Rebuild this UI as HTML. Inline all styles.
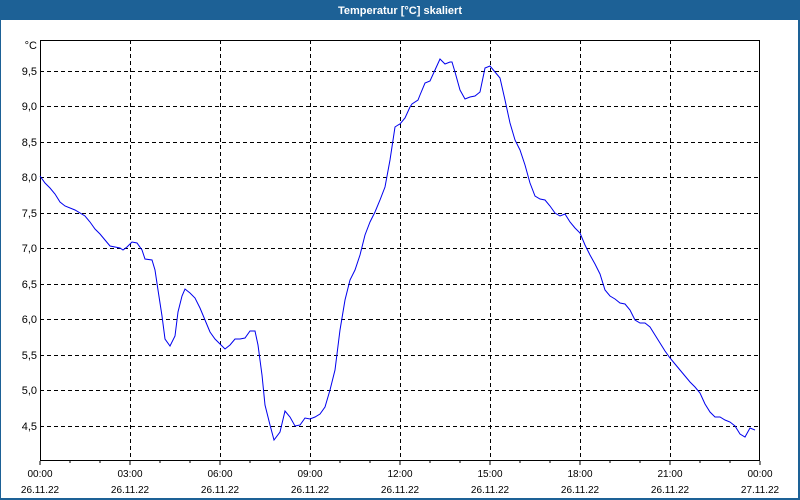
<!DOCTYPE html>
<html><head><meta charset="utf-8"><style>
html,body{margin:0;padding:0;width:800px;height:500px;overflow:hidden;background:#fff;font-family:"Liberation Sans",sans-serif}
</style></head><body>
<svg width="800" height="500" xmlns="http://www.w3.org/2000/svg" style="display:block">
<rect x="0" y="0" width="800" height="500" fill="#1d6196"/>
<rect x="1" y="20" width="797" height="478" fill="#fff"/>
<text x="400" y="14" fill="#fff" font-size="11" font-weight="bold" text-anchor="middle" font-family="Liberation Sans,sans-serif">Temperatur [°C] skaliert</text>
<g stroke="#000" stroke-width="1" stroke-dasharray="4,3" shape-rendering="crispEdges">
<line x1="130.5" y1="40" x2="130.5" y2="461"/><line x1="220.5" y1="40" x2="220.5" y2="461"/><line x1="310.5" y1="40" x2="310.5" y2="461"/><line x1="400.5" y1="40" x2="400.5" y2="461"/><line x1="490.5" y1="40" x2="490.5" y2="461"/><line x1="580.5" y1="40" x2="580.5" y2="461"/><line x1="670.5" y1="40" x2="670.5" y2="461"/>
<line x1="40" y1="71.5" x2="760" y2="71.5"/><line x1="40" y1="106.5" x2="760" y2="106.5"/><line x1="40" y1="142.5" x2="760" y2="142.5"/><line x1="40" y1="177.5" x2="760" y2="177.5"/><line x1="40" y1="213.5" x2="760" y2="213.5"/><line x1="40" y1="248.5" x2="760" y2="248.5"/><line x1="40" y1="284.5" x2="760" y2="284.5"/><line x1="40" y1="319.5" x2="760" y2="319.5"/><line x1="40" y1="355.5" x2="760" y2="355.5"/><line x1="40" y1="390.5" x2="760" y2="390.5"/><line x1="40" y1="426.5" x2="760" y2="426.5"/>
</g>
<g stroke="#000" stroke-width="1" fill="none" shape-rendering="crispEdges">
<rect x="40.5" y="40.5" width="719" height="420"/>
<path d="M40 461v4M70 461v2M100 461v2M130 461v4M160 461v2M190 461v2M220 461v4M250 461v2M280 461v2M310 461v4M340 461v2M370 461v2M400 461v4M430 461v2M460 461v2M490 461v4M520 461v2M550 461v2M580 461v4M610 461v2M640 461v2M670 461v4M700 461v2M730 461v2M760 461v4"/>
</g>
<polyline fill="none" stroke="#0000ee" stroke-width="1" points="40,176 45,183 50,188 55,194 60,202 65,206 75,210 85,216 90,222 95,229 100,234 105,240 110,246 120,248 123,250 127,247 132,242 137,243 142,250 145,259 152,260 155,270 158,290 162,316 165,339 170,346 175,336 178,312 182,296 185,289 190,293 195,298 200,308 205,320 210,332 215,339 220,344 225,349 230,345 235,339 240,339 245,338 250,331 255,331 258,345 262,375 265,405 270,425 274,440 280,432 285,411 290,417 295,426 300,425 305,418 310,419 315,417 320,414 325,407 330,390 335,370 340,330 345,300 350,280 355,270 360,255 365,235 370,222 375,212 380,200 385,187 390,160 395,127 398,125 400,124 405,118 410,107 412,104 418,100 420,95 425,83 430,81 435,70 440,59 445,64 450,62 452,62 455,72 460,90 465,99 470,97 475,96 480,92 485,68 490,66 495,72 500,78 505,100 510,123 515,140 520,150 525,165 530,183 535,196 540,199 545,200 550,206 555,213 560,216 565,214 570,222 575,228 580,233 585,245 590,255 595,264 600,274 605,290 610,296 615,299 620,303 625,304 630,310 635,320 640,323 645,323 650,327 655,335 660,343 665,351 670,358 675,364 680,370 685,376 690,382 695,387 700,393 705,404 710,412 715,417 720,417 725,420 730,422 735,426 740,434 745,437 750,428 755,430"/>
<g font-size="11" fill="#000" font-family="Liberation Sans,sans-serif" text-anchor="end">
<text x="37" y="49">°C</text>
<text x="37" y="75">9,5</text><text x="37" y="110">9,0</text><text x="37" y="146">8,5</text><text x="37" y="181">8,0</text><text x="37" y="217">7,5</text><text x="37" y="252">7,0</text><text x="37" y="288">6,5</text><text x="37" y="323">6,0</text><text x="37" y="359">5,5</text><text x="37" y="394">5,0</text><text x="37" y="430">4,5</text>
</g>
<g font-size="10" fill="#000" font-family="Liberation Sans,sans-serif" text-anchor="middle">
<text x="40" y="477">00:00</text><text x="40" y="493">26.11.22</text>
<text x="130" y="477">03:00</text><text x="130" y="493">26.11.22</text>
<text x="220" y="477">06:00</text><text x="220" y="493">26.11.22</text>
<text x="310" y="477">09:00</text><text x="310" y="493">26.11.22</text>
<text x="400" y="477">12:00</text><text x="400" y="493">26.11.22</text>
<text x="490" y="477">15:00</text><text x="490" y="493">26.11.22</text>
<text x="580" y="477">18:00</text><text x="580" y="493">26.11.22</text>
<text x="670" y="477">21:00</text><text x="670" y="493">26.11.22</text>
<text x="760" y="477">00:00</text><text x="760" y="493">27.11.22</text>
</g>
</svg>
</body></html>
